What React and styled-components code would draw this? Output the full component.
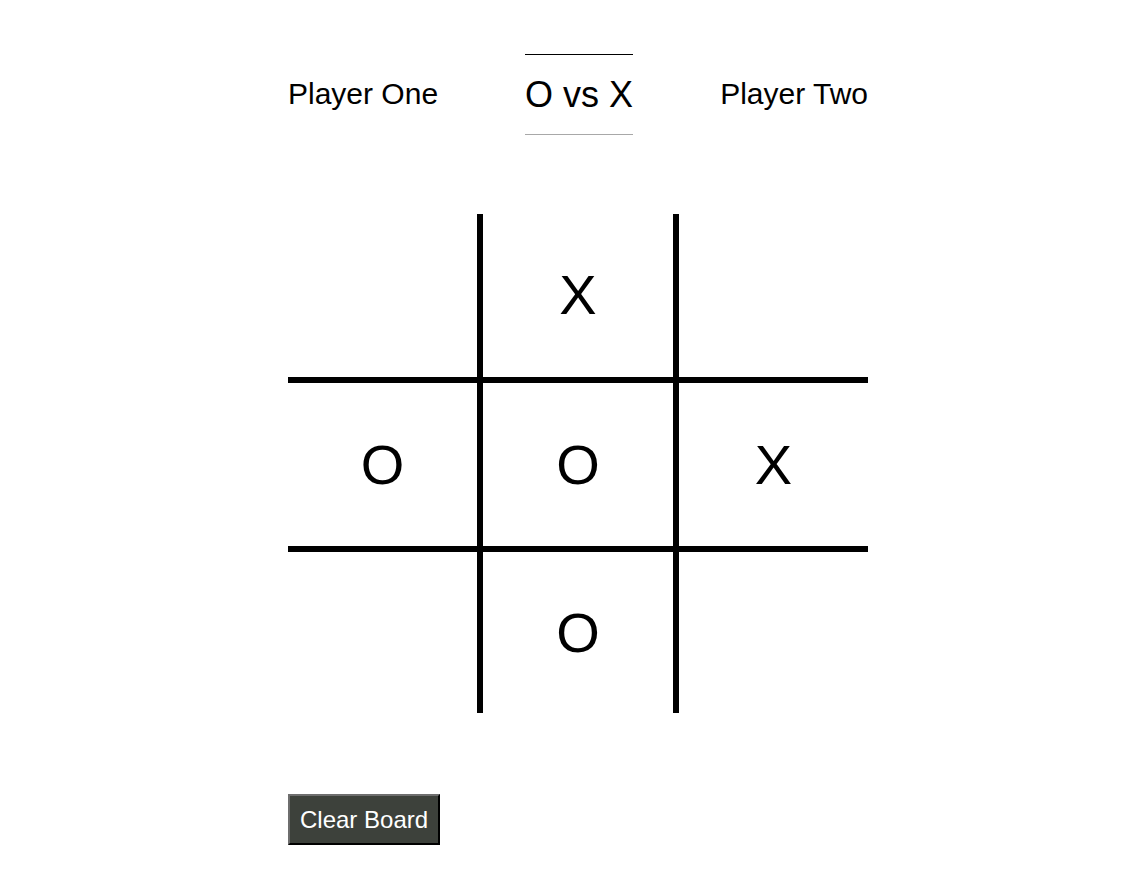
import React from "react";
import styled, { createGlobalStyle } from "styled-components";

const Global = createGlobalStyle`
  html, body { margin: 0; padding: 0; background: #fff; }
  body { font-family: "Liberation Sans", Arial, sans-serif; color: #000; }
`;

const Page = styled.div`
  width: 580px;
  margin: 0 0 0 288px;
  padding-top: 54px;
`;

const Header = styled.header`
  display: flex;
  justify-content: space-between;
  align-items: center;
`;

const PlayerName = styled.div`
  font-size: 30px;
  line-height: 34px;
  margin-top: -1px;
`;

const Versus = styled.div`
  font-size: 36px;
  line-height: 41px;
  padding: 19px 0;
  border-top: 1px solid #000;
  border-bottom: 1px solid #a8a8a8;
`;

const Board = styled.div`
  margin-top: 79px;
  height: 499px;
  display: grid;
  grid-template-columns: 189px 190px 189px;
  grid-template-rows: 163px 163px 161px;
  gap: 6px;
  background: #000;
`;

const Cell = styled.div`
  background: #fff;
  display: flex;
  align-items: center;
  justify-content: center;
  font-size: 56px;
  line-height: 1;
  padding-bottom: ${(p) => (p.$row === 0 ? 2 : 0)}px;
`;

const ClearButton = styled.button`
  margin-top: 81px;
  font-family: "Liberation Sans", Arial, sans-serif;
  font-size: 24px;
  line-height: 27px;
  color: #fff;
  background: #3d413b;
  padding: 10px 10px;
  border-style: solid;
  border-width: 2px;
  border-color: #6e6e6e #000 #000 #6e6e6e;
  cursor: pointer;
`;

const cells = ["", "X", "", "O", "O", "X", "", "O", ""];

export default function App() {
  return (
    <>
      <Global />
      <Page>
        <Header>
          <PlayerName>Player One</PlayerName>
          <Versus>O vs X</Versus>
          <PlayerName>Player Two</PlayerName>
        </Header>
        <Board>
          {cells.map((c, i) => (
            <Cell key={i} $row={Math.floor(i / 3)}>
              {c}
            </Cell>
          ))}
        </Board>
        <ClearButton>Clear Board</ClearButton>
      </Page>
    </>
  );
}
